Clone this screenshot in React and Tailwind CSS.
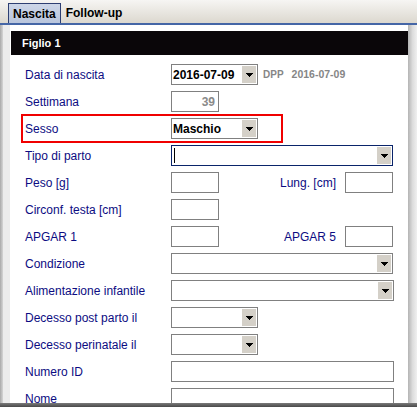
import React from "react";

const font = { fontFamily: '"Liberation Sans", Arial, sans-serif' };

// piccola freccia nera dei combo in stile Swing/Windows classico
function Freccia() {
  return (
    <svg width="7" height="4" viewBox="0 0 7 4" shapeRendering="crispEdges">
      <path d="M0 0h7v1h-1v1h-1v1h-1v1h-1v-1h-1v-1h-1v-1h-1z" fill="#000" />
    </svg>
  );
}

function Combo({ width = "w-[87px]", valore, attivo }) {
  return (
    <div
      className={`flex h-[21px] ${width} items-stretch border bg-white ${
        attivo ? "border-[#0a246a]" : "border-[#808080]"
      }`}
    >
      <span className="flex flex-1 items-center pl-[1px] text-[12px] font-bold text-black">
        {attivo && <span className="ml-[1px] h-[15px] w-px bg-black" />}
        {valore}
      </span>
      <span className="my-[1px] mr-[1px] flex w-[14px] items-center justify-center bg-[#d4d0c8]">
        <Freccia />
      </span>
    </div>
  );
}

function Campo({ width = "w-[48px]", children, className = "" }) {
  return (
    <div className={`flex h-[21px] ${width} items-center border border-[#808080] bg-white ${className}`}>
      {children}
    </div>
  );
}

function Riga({ etichetta, children }) {
  return (
    <div className="flex h-[21px] items-center">
      <span className="w-[146px] shrink-0 text-[12px] text-[#0c0c82]">{etichetta}</span>
      <div className="flex items-center">{children}</div>
    </div>
  );
}

export default function App() {
  return (
    <div style={font} className="flex h-[407px] w-[417px] flex-col overflow-hidden bg-white">
      {/* schede in alto */}
      <div className="flex h-[25px] shrink-0 items-end border-b-2 border-[#4566a6] bg-gradient-to-b from-[#f6f5f3] to-[#dcd8cf] pl-[8px]">
        <div className="flex h-[20px] items-center border border-b-0 border-[#2e3f72] bg-gradient-to-b from-[#cdd6e8] to-[#b9c5dc] px-[4px] text-[12px] font-bold text-black">
          Nascita
        </div>
        <div className="flex h-[20px] items-center px-[5px] text-[12px] font-bold text-black">Follow-up</div>
      </div>

      <div className="flex min-h-0 flex-1">
        {/* bordo sinistro */}
        <div className="flex w-[10px] shrink-0">
          <div className="w-[3px] bg-gradient-to-r from-[#a9a9a9] to-[#d6d6d6]" />
          <div className="flex-1 bg-[#ececec]" />
        </div>

        {/* pannello figlio */}
        <div className="flex min-w-0 flex-1 flex-col overflow-hidden bg-white pt-[6px]">
          <div className="ml-px flex h-[24px] shrink-0 items-center bg-[#0a0609] pl-[11px] text-[11px] font-bold text-white">
            Figlio 1
          </div>

          <div className="flex flex-col gap-[6px] pl-[15px] pt-[9px]">
            <Riga etichetta="Data di nascita">
              <Combo valore="2016-07-09" />
              <span className="ml-[5px] text-[10px] font-bold text-[#868686]">DPP</span>
              <span className="ml-[8px] text-[10.5px] font-bold text-[#868686]">2016-07-09</span>
            </Riga>

            <Riga etichetta="Settimana">
              <Campo className="justify-end bg-[#ece9ec] pr-[3px]">
                <span className="text-[12px] font-bold text-[#8a8a8a]">39</span>
              </Campo>
            </Riga>

            <div className="relative">
              <div className="pointer-events-none absolute -left-[4px] -top-[4px] h-[29px] w-[262px] border-2 border-[#f00000]" />
              <Riga etichetta="Sesso">
                <Combo valore="Maschio" />
              </Riga>
            </div>

            <Riga etichetta="Tipo di parto">
              <Combo width="w-[222px]" attivo />
            </Riga>

            <Riga etichetta="Peso [g]">
              <div className="flex w-[222px] items-center">
                <Campo />
                <span className="flex-1 pr-[9px] text-right text-[12px] text-[#0c0c82]">Lung. [cm]</span>
                <Campo />
              </div>
            </Riga>

            <Riga etichetta="Circonf. testa [cm]">
              <Campo />
            </Riga>

            <Riga etichetta="APGAR 1">
              <div className="flex w-[222px] items-center">
                <Campo />
                <span className="flex-1 pr-[9px] text-right text-[12px] text-[#0c0c82]">APGAR 5</span>
                <Campo />
              </div>
            </Riga>

            <Riga etichetta="Condizione">
              <Combo width="w-[222px]" />
            </Riga>

            <Riga etichetta="Alimentazione infantile">
              <Combo width="w-[223px]" />
            </Riga>

            <Riga etichetta="Decesso post parto il">
              <Combo />
            </Riga>

            <Riga etichetta="Decesso perinatale il">
              <Combo />
            </Riga>

            <Riga etichetta="Numero ID">
              <Campo width="w-[223px]" />
            </Riga>

            <Riga etichetta="Nome">
              <Campo width="w-[223px]" />
            </Riga>
          </div>
        </div>

        {/* ombra destra */}
        <div className="w-[9px] shrink-0 bg-gradient-to-r from-[#b4b4b4] via-[#dcdcdc] to-[#f0f0f0]" />
      </div>

      <div className="h-[4px] shrink-0 bg-gradient-to-b from-[#7a7a7a] to-[#4a4a4a]" />
    </div>
  );
}
